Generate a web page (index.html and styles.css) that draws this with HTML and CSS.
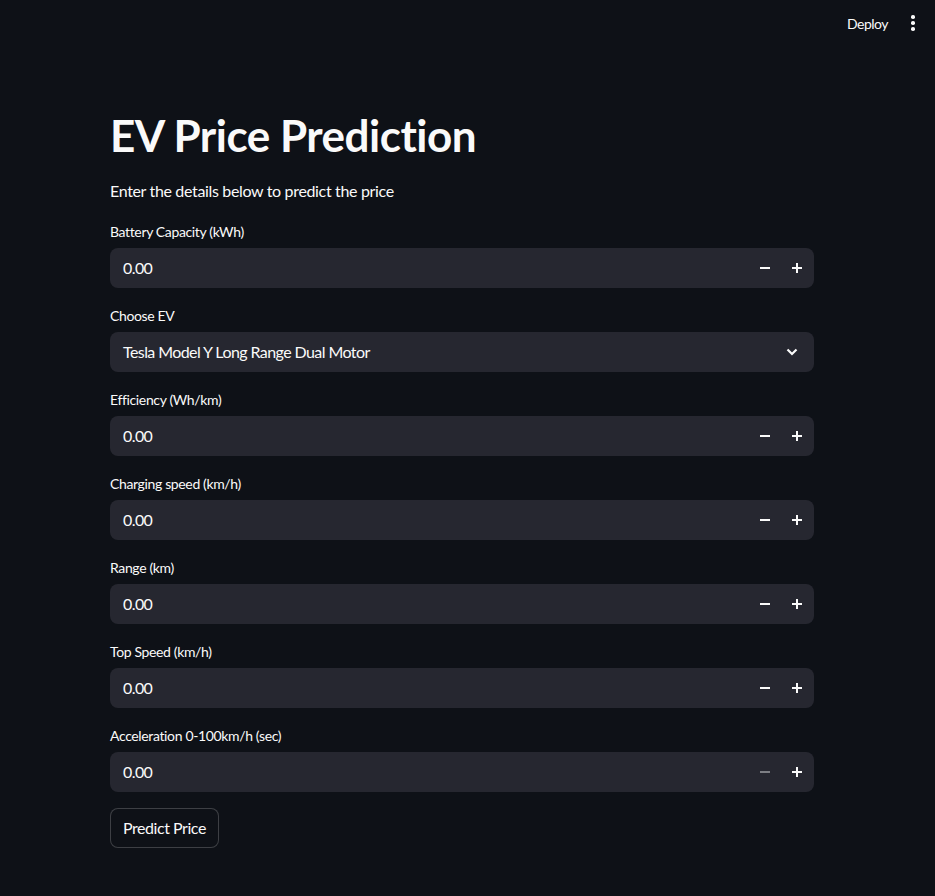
FILE: index.html
```html
<!DOCTYPE html>
<html lang="en">
<head>
<meta charset="utf-8">
<title>EV Price Prediction</title>
<link rel="stylesheet" href="styles.css">
</head>
<body>
<header class="topbar">
  <span class="deploy">Deploy</span>
  <span class="kebab"><i></i><i></i><i></i></span>
</header>
<main class="container">
  <h1 class="title">EV Price Prediction</h1>
  <p class="subtitle">Enter the details below to predict the price</p>

  <div class="field">
    <label class="label">Battery Capacity (kWh)</label>
    <div class="box"><span class="value">0.00</span>
      <span class="step"><svg width="10" height="10" viewBox="0 0 10 10"><rect x="0" y="4" width="10" height="2" fill="#fafafa"/></svg></span>
      <span class="step"><svg width="10" height="10" viewBox="0 0 10 10"><rect x="0" y="4" width="10" height="2" fill="#fafafa"/><rect x="4" y="0" width="2" height="10" fill="#fafafa"/></svg></span>
    </div>
  </div>

  <div class="field">
    <label class="label">Choose EV</label>
    <div class="box"><span class="value">Tesla Model Y Long Range Dual Motor</span>
      <span class="chev"><svg width="12" height="8" viewBox="0 0 12 8"><path d="M1.5 1.5 L6 6 L10.5 1.5" fill="none" stroke="#fafafa" stroke-width="2.2"/></svg></span>
    </div>
  </div>

  <div class="field">
    <label class="label">Efficiency (Wh/km)</label>
    <div class="box"><span class="value">0.00</span>
      <span class="step"><svg width="10" height="10" viewBox="0 0 10 10"><rect x="0" y="4" width="10" height="2" fill="#fafafa"/></svg></span>
      <span class="step"><svg width="10" height="10" viewBox="0 0 10 10"><rect x="0" y="4" width="10" height="2" fill="#fafafa"/><rect x="4" y="0" width="2" height="10" fill="#fafafa"/></svg></span>
    </div>
  </div>

  <div class="field">
    <label class="label">Charging speed (km/h)</label>
    <div class="box"><span class="value">0.00</span>
      <span class="step"><svg width="10" height="10" viewBox="0 0 10 10"><rect x="0" y="4" width="10" height="2" fill="#fafafa"/></svg></span>
      <span class="step"><svg width="10" height="10" viewBox="0 0 10 10"><rect x="0" y="4" width="10" height="2" fill="#fafafa"/><rect x="4" y="0" width="2" height="10" fill="#fafafa"/></svg></span>
    </div>
  </div>

  <div class="field">
    <label class="label">Range (km)</label>
    <div class="box"><span class="value">0.00</span>
      <span class="step"><svg width="10" height="10" viewBox="0 0 10 10"><rect x="0" y="4" width="10" height="2" fill="#fafafa"/></svg></span>
      <span class="step"><svg width="10" height="10" viewBox="0 0 10 10"><rect x="0" y="4" width="10" height="2" fill="#fafafa"/><rect x="4" y="0" width="2" height="10" fill="#fafafa"/></svg></span>
    </div>
  </div>

  <div class="field">
    <label class="label">Top Speed (km/h)</label>
    <div class="box"><span class="value">0.00</span>
      <span class="step"><svg width="10" height="10" viewBox="0 0 10 10"><rect x="0" y="4" width="10" height="2" fill="#fafafa"/></svg></span>
      <span class="step"><svg width="10" height="10" viewBox="0 0 10 10"><rect x="0" y="4" width="10" height="2" fill="#fafafa"/><rect x="4" y="0" width="2" height="10" fill="#fafafa"/></svg></span>
    </div>
  </div>

  <div class="field">
    <label class="label">Acceleration 0-100km/h (sec)</label>
    <div class="box"><span class="value">0.00</span>
      <span class="step"><svg width="10" height="10" viewBox="0 0 10 10"><rect x="0" y="4" width="10" height="2" fill="#7d7e84"/></svg></span>
      <span class="step"><svg width="10" height="10" viewBox="0 0 10 10"><rect x="0" y="4" width="10" height="2" fill="#fafafa"/><rect x="4" y="0" width="2" height="10" fill="#fafafa"/></svg></span>
    </div>
  </div>

  <div class="actions">
    <button class="btn">Predict Price</button>
  </div>
</main>
</body>
</html>
```

FILE: styles.css
```css
* { box-sizing: border-box; }
html, body {
  margin: 0;
  padding: 0;
  background: #0e1117;
  color: #fafafa;
  font-family: "Lato", "Noto Sans", sans-serif;
  height: 100%;
}
body { overflow: hidden; }

.topbar {
  height: 46px;
  display: flex;
  justify-content: flex-end;
  align-items: center;
  padding-right: 20px;
  gap: 23px;
}
.deploy {
  font-size: 14px;
  color: #fafafa;
  letter-spacing: -0.5px;
}
.kebab {
  display: flex;
  flex-direction: column;
  gap: 2.5px;
  width: 4px;
}
.kebab i {
  display: block;
  width: 3.5px;
  height: 3.5px;
  border-radius: 50%;
  background: #fafafa;
}

.container {
  width: 704px;
  margin-left: 110px;
  display: flex;
  flex-direction: column;
  gap: 16px;
  padding-top: 63px;
}
.title {
  margin: 0;
  font-size: 44px;
  line-height: 52px;
  font-weight: 700;
  letter-spacing: -0.5px;
}
.subtitle {
  margin: 1px 0 0;
  font-size: 16px;
  line-height: 25.6px;
  letter-spacing: -0.34px;
}
.field {
  display: flex;
  flex-direction: column;
}
.label {
  font-size: 14px;
  line-height: 24px;
  height: 24px;
  margin-bottom: 4px;
  letter-spacing: -0.36px;
}
.box {
  height: 40px;
  background: #262730;
  border-radius: 8px;
  display: flex;
  align-items: center;
  padding-left: 13px;
  padding-right: 1px;
}
.value {
  flex: 1;
  font-size: 16px;
  letter-spacing: -0.58px;
}
.step {
  width: 32px;
  height: 40px;
  display: flex;
  align-items: center;
  justify-content: center;
}
.step svg { display: block; }
.chev {
  width: 32px;
  height: 40px;
  display: flex;
  align-items: center;
  justify-content: center;
  margin-right: 5px;
}
.actions { display: flex; }
.btn {
  height: 40px;
  padding: 0 12px;
  background: #0e1117;
  color: #fafafa;
  border: 1px solid rgba(250,250,250,0.2);
  border-radius: 8px;
  font-family: inherit;
  font-size: 16px;
  letter-spacing: -0.45px;
}
```
